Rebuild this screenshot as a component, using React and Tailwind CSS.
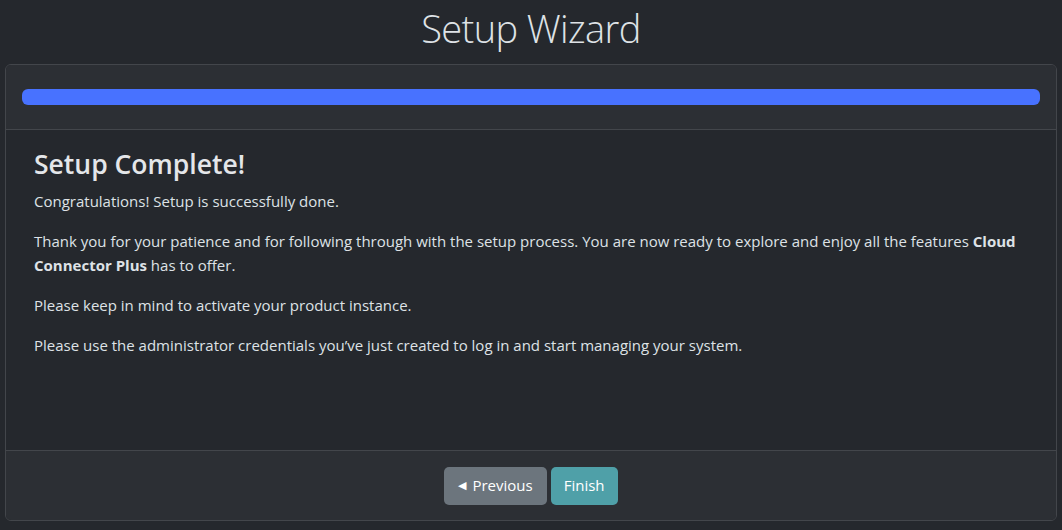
import React from "react";

export default function App() {
  return (
    <div className="min-h-[530px] w-[1062px] bg-[#25282d] text-[#dee2e6]" style={{ fontFamily: '"Open Sans", "Noto Sans", sans-serif' }}>
      <h1 className="pt-[2px] h-[64px] text-center text-[38px] font-light tracking-[-0.6px] leading-[52px] text-[#dee2e6]">Setup Wizard</h1>
      <div className="mx-[5px] mb-[9px] rounded-[6px] border border-[#43464b] bg-[#25282d] overflow-hidden">
        <div className="h-[65px] bg-[#2c2f34] border-b border-[#43464b] px-[16px] pt-[24px]">
          <div className="h-[16px] rounded-[6px] bg-[#4872ff]"></div>
        </div>
        <div className="h-[320px] px-[28px] pt-[17px]">
          <h2 className="text-[26.5px] font-semibold leading-[34px] mb-[8px] text-[#e4e6e9]">Setup Complete!</h2>
          <p className="text-[15px] leading-[24px] mb-[16px]">Congratulations! Setup is successfully done.</p>
          <p className="text-[15px] leading-[24px] mb-[16px]">Thank you for your patience and for following through with the setup process. You are now ready to explore and enjoy all the features <b className="font-bold">Cloud Connector Plus</b> has to offer.</p>
          <p className="text-[15px] leading-[24px] mb-[16px]">Please keep in mind to activate your product instance.</p>
          <p className="text-[15px] leading-[24px]">Please use the administrator credentials you’ve just created to log in and start managing your system.</p>
        </div>
        <div className="h-[70px] bg-[#2c2f34] border-t border-[#43464b] flex justify-center items-center gap-[4px]">
          <button className="h-[38px] px-[14px] rounded-[5px] bg-[#6c757d] text-white text-[15px] flex items-center gap-[6px]">
            <span className="text-[11px]">◀</span>Previous
          </button>
          <button className="h-[38px] px-[13px] rounded-[5px] bg-[#4fa0a8] text-white text-[15px]">Finish</button>
        </div>
      </div>
    </div>
  );
}
